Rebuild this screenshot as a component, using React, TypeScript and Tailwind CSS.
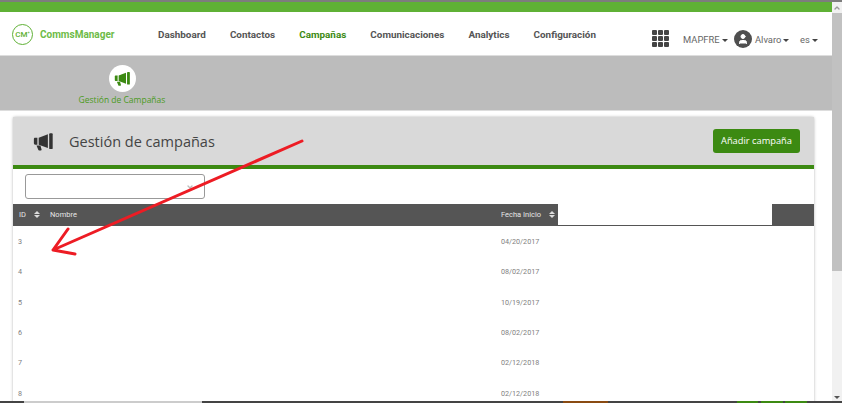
import { ChevronDown, ChevronUp, User } from "lucide-react";

const navItems = ["Dashboard", "Contactos", "Campañas", "Comunicaciones", "Analytics", "Configuración"];

const rows = [
  ["3", "04/20/2017"],
  ["4", "08/02/2017"],
  ["5", "10/19/2017"],
  ["6", "08/02/2017"],
  ["7", "02/12/2018"],
  ["8", "02/12/2018"],
];

function Caret() {
  return <span className="ml-[2px] inline-block border-x-[3px] border-t-[3px] border-x-transparent border-t-[#444]" />;
}

function SortIcon() {
  return (
    <span className="flex flex-col items-center gap-px">
      <span className="border-x-[3.5px] border-b-[3.5px] border-x-transparent border-b-[#ddd]" />
      <span className="border-x-[3.5px] border-t-[3.5px] border-x-transparent border-t-[#ddd]" />
    </span>
  );
}

// horn pointing left with the bar on its right, as in the reference
function Horn({ className }: { className: string }) {
  return (
    <svg className={className} viewBox="0 0 24 20" fill="currentColor">
      <path d="M1 6.5 C1 5.6 1.6 5 2.5 5 H5 V13 H2.5 C1.6 13 1 12.4 1 11.5 Z" />
      <path d="M6.5 5 L17 1.2 V16.8 L6.5 13 Z" />
      <rect x="18.5" y="0" width="4" height="18" rx="1" />
      <path d="M4 14 H8.5 L9.8 18.6 C9.9 19.3 9.5 19.6 9 19.6 H7 C6.5 19.6 6.2 19.3 6 18.8 Z" />
    </svg>
  );
}

function Scrollbar() {
  return (
    <div className="flex w-[10px] shrink-0 flex-col bg-[#f1f1f1]">
      <div className="flex h-[11px] items-center justify-center">
        <ChevronUp className="h-2 w-2 text-[#999]" strokeWidth={4} />
      </div>
      <div className="h-[258px] bg-[#c1c1c1]" />
      <div className="flex-1" />
      <div className="flex h-[12px] items-center justify-center">
        <span className="border-x-[3px] border-t-[3px] border-x-transparent border-t-[#555]" />
      </div>
    </div>
  );
}

export default function App() {
  return (
    <div className="relative flex h-[403px] w-[842px] flex-col overflow-hidden bg-white font-['Roboto',sans-serif]">
      <div className="h-[2px] shrink-0 bg-[#7d7d7d]" />
      <div className="flex min-h-0 flex-1">
        <div className="flex min-w-0 flex-1 flex-col">
          <div className="h-[10px] shrink-0 bg-[#5fb135]" />

          <header className="flex h-[44px] shrink-0 border-b border-[#ddd] bg-white">
            <div className="flex w-[158px] shrink-0 items-center pl-3 pt-[2px]">
              <span className="flex h-[21px] w-[21px] shrink-0 items-center justify-center rounded-full border border-[#5fb135] text-[8px] font-medium text-[#5fb135]">
                CM<sup className="text-[4px]">+</sup>
              </span>
              <span className="ml-[7px] text-[10px] font-bold text-[#6dbb47]">CommsManager</span>
            </div>
            <nav className="flex w-[438px] shrink-0 justify-between pt-[15px] text-[9.9px] font-bold leading-4 text-[#555]">
              {navItems.map((item) => (
                <span key={item} className={item === "Campañas" ? "text-[#3c8a12]" : ""}>
                  {item}
                </span>
              ))}
            </nav>
            <div className="ml-[56px] flex shrink-0 items-start pt-[19px] text-[9.4px] text-[#666]">
              <span className="mt-[-1px] grid h-[17px] w-[17px] grid-cols-3 gap-px">
                {Array.from({ length: 9 }).map((_, i) => (
                  <span key={i} className="rounded-[1px] bg-[#444]" />
                ))}
              </span>
              <span className="ml-[14px] mt-[3px] flex w-[45px] items-center leading-3">
                MAPFRE
                <Caret />
              </span>
              <span className="ml-[6px] mt-[-1px] flex h-[18px] w-[18px] items-center justify-center rounded-full bg-[#4f4f4f]">
                <User className="h-3 w-3 fill-white text-white" />
              </span>
              <span className="ml-[3px] mt-[3px] flex w-[35px] items-center leading-3">
                Alvaro
                <Caret />
              </span>
              <span className="ml-[10px] mt-[3px] flex items-center leading-3">
                es
                <Caret />
              </span>
            </div>
          </header>

          <div className="flex h-[55px] shrink-0 flex-col items-center border-b border-[#ddd] bg-[#bcbcbc] pt-[9px] pr-[588px]">
            <span className="flex h-[27px] w-[27px] items-center justify-center rounded-full bg-white">
              <Horn className="h-[14px] w-[17px] text-[#3c8a12]" />
            </span>
            <span className="mt-[2px] whitespace-nowrap font-['Open_Sans',sans-serif] text-[8.5px] leading-3 text-[#4b9a22]">
              Gestión de Campañas
            </span>
          </div>

          <main className="min-h-0 flex-1 pl-[13px] pr-[18px] pt-[6px]">
            <section className="h-[400px] rounded-t-[2px] bg-white shadow-[0_0_3px_rgba(0,0,0,0.3)]">
              <div className="flex h-[52px] items-center justify-between border-b-4 border-[#3c8a12] bg-[#d9d9d9] pl-[20px] pr-[14px]">
                <div className="flex items-center pt-[2px]">
                  <Horn className="h-[18px] w-[21px] text-[#333]" />
                  <h1 className="ml-[15px] font-['Open_Sans',sans-serif] text-[14.5px] text-[#444]">Gestión de campañas</h1>
                </div>
                <button className="h-6 w-[87px] rounded-[3px] bg-[#3c8a12] font-['Open_Sans',sans-serif] text-[9.3px] text-white">
                  Añadir campaña
                </button>
              </div>

              <div className="py-[5px] pl-[12px]">
                <div className="flex h-[25px] w-[180px] items-center justify-end rounded-[3px] border border-[#999] bg-white pr-[10px]">
                  <ChevronDown className="h-2 w-2 text-[#bbb]" strokeWidth={4} />
                </div>
              </div>

              <div className="flex h-[22px] border-b border-[#555] text-[7.5px] text-[#e6e6e6]">
                <div className="flex w-[37px] items-center gap-2 bg-[#555] pl-[6px]">
                  ID
                  <SortIcon />
                </div>
                <div className="flex w-[451px] items-center bg-[#555]">Nombre</div>
                <div className="flex w-[57px] items-center gap-[8px] whitespace-nowrap bg-[#555]">
                  Fecha Inicio
                  <SortIcon />
                </div>
                <div className="w-[214px] bg-white" />
                <div className="flex-1 bg-[#555]" />
              </div>

              <div className="pt-[1px]">
                {rows.map(([id, date]) => (
                  <div key={id} className="flex h-[30.4px] items-center text-[7.2px] text-[#808080]">
                    <span className="w-[488px] pl-[5px]">{id}</span>
                    <span>{date}</span>
                  </div>
                ))}
              </div>
            </section>
          </main>
        </div>
        <Scrollbar />
      </div>

      <div className="absolute inset-x-0 bottom-0 flex h-[2px] bg-[#444]">
        <span className="ml-[24px] w-[178px] bg-[#ccc]" />
        <span className="ml-[361px] w-[45px] bg-[#8a4b12]" />
        <span className="ml-[129px] w-[21px] bg-[#3c8a12]" />
        <span className="ml-[3px] w-[22px] bg-[#3c8a12]" />
        <span className="ml-[2px] w-[22px] bg-[#3c8a12]" />
      </div>

      <svg className="absolute left-0 top-0 h-[403px] w-[842px]" viewBox="0 0 842 403" fill="none">
        <path
          d="M302 141 L53 250 M68 229 L53 250 L75 254"
          stroke="#ed1c24"
          strokeWidth="3"
          strokeLinecap="round"
          strokeLinejoin="round"
        />
      </svg>
    </div>
  );
}
